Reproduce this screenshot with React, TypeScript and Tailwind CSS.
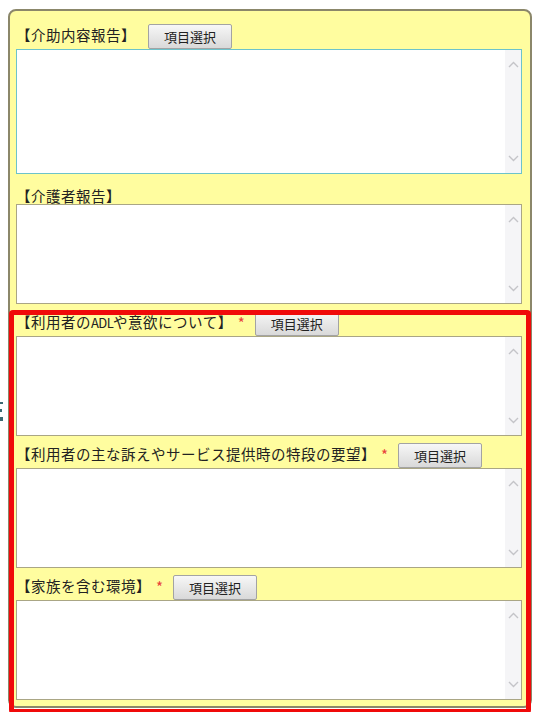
import type { ReactNode } from "react";

const font = { fontFamily: '"Noto Sans CJK JP", "Noto Sans", sans-serif' };

function SelectButton() {
  return (
    <button className="h-[25px] w-[84px] rounded-[2px] border border-[#a3a3a3] bg-gradient-to-b from-[#f7f7f7] to-[#d9d9d9] text-[13px] leading-none text-[#222]">
      項目選択
    </button>
  );
}

function Memo({ height, focused }: { height: string; focused?: boolean }) {
  return (
    <div
      className={`relative flex ${height} w-full bg-white border ${
        focused ? "border-[#6cc3cb]" : "border-[#aaa685]"
      }`}
    >
      <div className="flex-1" />
      <div className="flex w-[16px] flex-col items-center justify-between bg-[#f5f5f7] py-[11px]">
        <svg width="11" height="7" viewBox="0 0 11 7" fill="none">
          <path d="M1 6 L5.5 1.5 L10 6" stroke="#c4c4c8" strokeWidth="1.4" />
        </svg>
        <svg width="11" height="7" viewBox="0 0 11 7" fill="none">
          <path d="M1 1 L5.5 5.5 L10 1" stroke="#c4c4c8" strokeWidth="1.4" />
        </svg>
      </div>
    </div>
  );
}

function Section({ label, required, button, children }: { label: ReactNode; required?: boolean; button?: boolean; children: ReactNode }) {
  return (
    <div className="flex flex-col">
      <div className={`flex ${button ? "h-[25px] items-center" : "h-[23px] items-end"}`}>
        <span className={`text-[14.5px] leading-none tracking-[0.5px] text-[#222] ${button ? "mt-[-2px]" : "mb-[1px]"}`}>{label}</span>
        {required && (
          <span className="ml-[5px] mr-[10px] mt-[-2px] text-[15px] leading-none text-[#e8403a]">*</span>
        )}
        {button && !required && <span className="w-[12px]" />}
        {button && <SelectButton />}
      </div>
      {children}
    </div>
  );
}

export default function App() {
  return (
    <div className="relative h-[712px] w-[539px] bg-white" style={font}>
      <div className="absolute left-0 top-[393px] flex flex-col gap-[5px]">
        <div className="h-[2px] w-[3px] bg-[#3b6a72]" />
        <div className="h-[3px] w-[2px] bg-[#3b6a72]" />
        <div className="h-[4px] w-[3px] bg-[#3b6a72]" />
      </div>

      <div className="ml-[8px] mt-[9px] h-[699px] w-[524px] rounded-[8px] border-2 border-[#8b876a] bg-[#fffd9f] pl-[6px] pr-[8px] pt-[13px]">
        <div className="flex flex-col gap-[7px]">
          <Section label="【介助内容報告】" button>
            <Memo height="h-[125px]" focused />
          </Section>
          <Section label="【介護者報告】">
            <Memo height="h-[100px]" />
          </Section>
          <Section
            label={
              <>
                【利用者の<span className="text-[13px] tracking-[-0.6px]">ADL</span>や意欲について】
              </>
            }
            required
            button
          >
            <Memo height="h-[100px]" />
          </Section>
          <Section label="【利用者の主な訴えやサービス提供時の特段の要望】" required button>
            <Memo height="h-[100px]" />
          </Section>
          <Section label="【家族を含む環境】" required button>
            <Memo height="h-[100px]" />
          </Section>
        </div>
      </div>

      <div className="absolute left-[9px] top-[301px] h-[404px] w-[522px] rounded-[4px] border-[5px] border-[#f00a0a]" />
    </div>
  );
}
